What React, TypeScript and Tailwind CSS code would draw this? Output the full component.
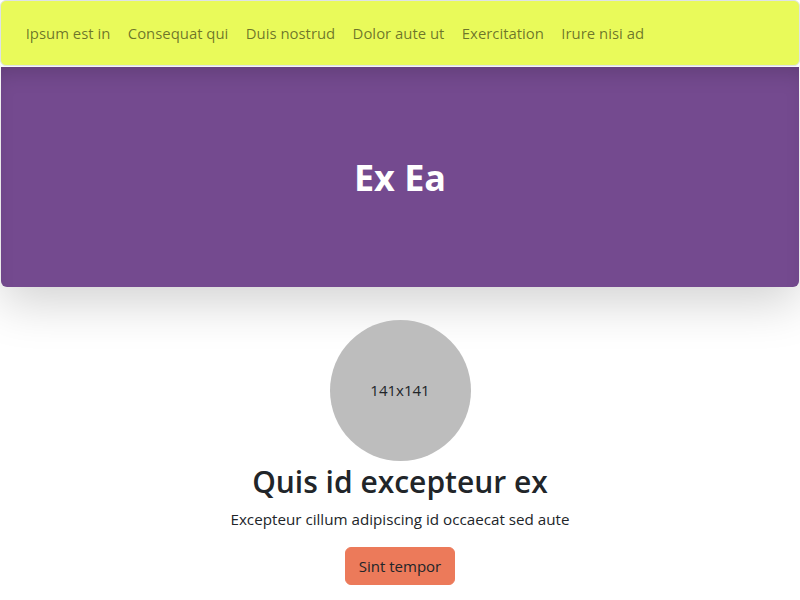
const links = [
  "Ipsum est in",
  "Consequat qui",
  "Duis nostrud",
  "Dolor aute ut",
  "Exercitation",
  "Irure nisi ad",
];

export default function App() {
  return (
    <div className="min-h-screen bg-white font-['Segoe_UI','Open_Sans',sans-serif] text-[#212529]">
      <nav className="relative z-10 flex h-[66px] items-center rounded-[6px] border border-[#dee2e6] bg-[#e9fa5a] px-[16px]">
        <ul className="flex items-center">
          {links.map((l) => (
            <li key={l}>
              <a href="#" className="block px-[8.7px] py-2 text-[14.9px] leading-6 text-black/55">
                {l}
              </a>
            </li>
          ))}
        </ul>
      </nav>

      <header className="mx-px mt-px flex h-[220px] items-center justify-center rounded-b-[6px] bg-[#744a8f] shadow-[0_1rem_3rem_rgba(0,0,0,0.175),inset_0_14px_22px_-10px_rgba(0,0,0,0.18)]">
        <h1 className="text-[36px] font-bold leading-tight text-white">Ex Ea</h1>
      </header>

      <section className="flex flex-col items-center pt-[33px] text-center">
        <div className="flex h-[141px] w-[141px] items-center justify-center rounded-full bg-[#bdbdbd] text-[15px] text-[#212529]">
          141x141
        </div>
        <h2 className="mt-[4px] mb-2 h-[34px] text-[30px] font-semibold leading-[34px]">
          Quis id excepteur ex
        </h2>
        <p className="mb-4 text-[15.2px] leading-6">
          Excepteur cillum adipiscing id occaecat sed aute
        </p>
        <button className="rounded-[6px] border border-[#ec7a5a] bg-[#ec7a5a] px-[13px] py-1.5 text-[15px] leading-6 text-[#212529]">
          Sint tempor
        </button>
      </section>
    </div>
  );
}
